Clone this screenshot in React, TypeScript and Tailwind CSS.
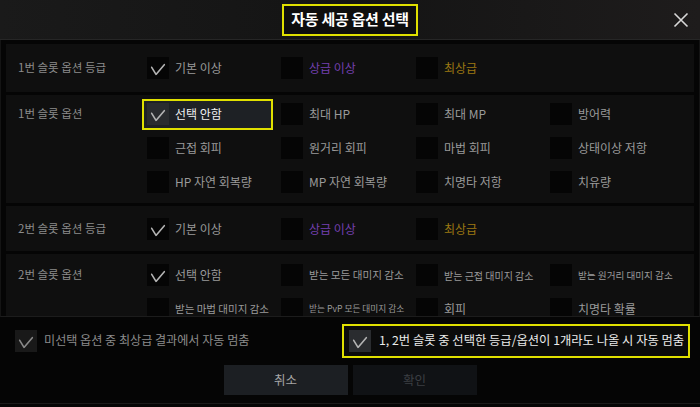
import React from 'react';

type Opt = { text: string; checked?: boolean; color?: string; size?: string; selected?: boolean };

const FONT = { fontFamily: '"Noto Sans CJK KR", "Noto Sans", sans-serif' };

function Check({ checked, light }: { checked?: boolean; light?: boolean }) {
    return (
        <div
            className={`w-[22px] h-[22px] shrink-0 flex items-center justify-center ${
                light ? 'bg-[#2a2c2f]' : 'bg-[#050505]'
            }`}
        >
            {checked && (
                <svg width="22" height="22" viewBox="0 0 22 22" fill="none">
                    <path d="M4.7 10.3 L9 17.4 L17.3 7.7" stroke="#b4b4b4" strokeWidth="1.6" strokeLinecap="round" strokeLinejoin="round" />
                </svg>
            )}
        </div>
    );
}

function Option({ opt }: { opt: Opt }) {
    if (opt.selected) {
        return (
            <div className="flex items-center h-[31px] -ml-[5px] pl-[3px] w-[131px] border-2 border-[#e0e000] bg-[#1e2125]">
                <Check checked light />
                <span className="ml-[6px] text-[12px] text-[#f0f0f0]">{opt.text}</span>
            </div>
        );
    }
    return (
        <div className="flex items-center">
            <Check checked={opt.checked} />
            <span className={`ml-[6px] whitespace-nowrap ${opt.size ?? 'text-[12px]'} ${opt.color ?? 'text-[#9a9a9a]'}`}>
                {opt.text}
            </span>
        </div>
    );
}

function Row({ label, lines, className }: { label: string; lines: Opt[][]; className: string }) {
    return (
        <div className={`flex bg-[#0f0f0f] shrink-0 ${className}`}>
            <div className="w-[141px] shrink-0 pl-[12px] text-[11.5px] text-[#8c8c8c] h-[34px] flex items-center">
                {label}
            </div>
            <div className="flex flex-col">
                {lines.map((line, i) => (
                    <div key={i} className="grid grid-cols-[134px_135px_134px_140px] items-center h-[34px]">
                        {line.map((o, j) => (
                            <Option key={j} opt={o} />
                        ))}
                    </div>
                ))}
            </div>
        </div>
    );
}

const grade: Opt[] = [
    { text: '기본 이상', checked: true },
    { text: '상급 이상', color: 'text-[#7440b0]' },
    { text: '최상급', color: 'text-[#9c7812]' },
];

export default function App() {
    return (
        <div className="w-[700px] h-[407px] bg-[#050505] flex flex-col overflow-hidden select-none" style={FONT}>
            {/* 헤더 */}
            <div className="relative h-[40px] shrink-0 flex items-center justify-center bg-gradient-to-r from-[#1a1a1a] via-[#141414] to-[#1e1c1c] border-b border-[#262626]">
                <div className="h-[32px] px-[7px] border-2 border-[#e0e000] bg-[#0e0e0e] flex items-center">
                    <span className="text-[15px] font-bold text-white tracking-[-0.02em]">자동 세공 옵션 선택</span>
                </div>
                <button className="absolute right-[10px] top-[11px] w-[18px] h-[18px] flex items-center justify-center">
                    <svg width="16" height="16" viewBox="0 0 16 16">
                        <path d="M1.5 1.5 L14.5 14.5 M14.5 1.5 L1.5 14.5" stroke="#d8d8d8" strokeWidth="1.6" />
                    </svg>
                </button>
            </div>

            {/* 옵션 목록 */}
            <div className="h-[277px] shrink-0 overflow-hidden px-[5px] pt-[4px] flex flex-col gap-[3px] border-x border-[#141414] border-b border-b-[#1c1c1c]">
                <Row label="1번 슬롯 옵션 등급" className="h-[48px] items-center" lines={[grade]} />
                <Row
                    label="1번 슬롯 옵션"
                    className="h-[108px] pt-[2px]"
                    lines={[
                        [
                            { text: '선택 안함', selected: true },
                            { text: '최대 HP' },
                            { text: '최대 MP' },
                            { text: '방어력' },
                        ],
                        [
                            { text: '근접 회피' },
                            { text: '원거리 회피' },
                            { text: '마법 회피' },
                            { text: '상태이상 저항' },
                        ],
                        [
                            { text: 'HP 자연 회복량' },
                            { text: 'MP 자연 회복량' },
                            { text: '치명타 저항' },
                            { text: '치유량' },
                        ],
                    ]}
                />
                <Row label="2번 슬롯 옵션 등급" className="h-[45px] items-center" lines={[grade]} />
                <Row
                    label="2번 슬롯 옵션"
                    className="h-[80px] pt-[4px]"
                    lines={[
                        [
                            { text: '선택 안함', checked: true },
                            { text: '받는 모든 대미지 감소', size: 'text-[10.6px]' },
                            { text: '받는 근접 대미지 감소', size: 'text-[10px]' },
                            { text: '받는 원거리 대미지 감소', size: 'text-[9.6px]' },
                        ],
                        [
                            { text: '받는 마법 대미지 감소', size: 'text-[10.5px]' },
                            { text: '받는 PvP 모든 대미지 감소', size: 'text-[8.7px]' },
                            { text: '회피' },
                            { text: '치명타 확률' },
                        ],
                    ]}
                />
            </div>

            {/* 하단 */}
            <div className="flex items-center h-[41px] pt-[6px] shrink-0">
                <div className="flex items-center pl-[15px]">
                    <div className="w-[22px] h-[22px] bg-[#191919] flex items-center justify-center">
                        <svg width="22" height="22" viewBox="0 0 22 22" fill="none">
                            <path d="M4.7 10.3 L9 17.4 L17.3 7.7" stroke="#8a8a8a" strokeWidth="1.6" strokeLinecap="round" strokeLinejoin="round" />
                        </svg>
                    </div>
                    <span className="ml-[7px] text-[12.1px] text-[#8c8c8c]">미선택 옵션 중 최상급 결과에서 자동 멈춤</span>
                </div>
                <div className="ml-auto mr-[10px] w-[348px] h-[34px] border-2 border-[#e0e000] bg-[#0b0b0b] flex items-center pl-[5px]">
                    <Check checked light />
                    <span className="ml-[8px] text-[12.3px] text-[#ececec] whitespace-nowrap">
                        1, 2번 슬롯 중 선택한 등급/옵션이 1개라도 나올 시 자동 멈춤
                    </span>
                </div>
            </div>

            <div className="flex justify-center gap-[5px] pt-[7px]">
                <button className="w-[124px] h-[30px] bg-[#1c1f23] text-[12.5px] text-[#a6a6a6]">취소</button>
                <button className="w-[124px] h-[30px] bg-[#101215] text-[12.5px] text-[#3c3f43]">확인</button>
            </div>
            <div className="mt-auto mb-[3px] h-px bg-[#1a1a1a]" />
        </div>
    );
}
